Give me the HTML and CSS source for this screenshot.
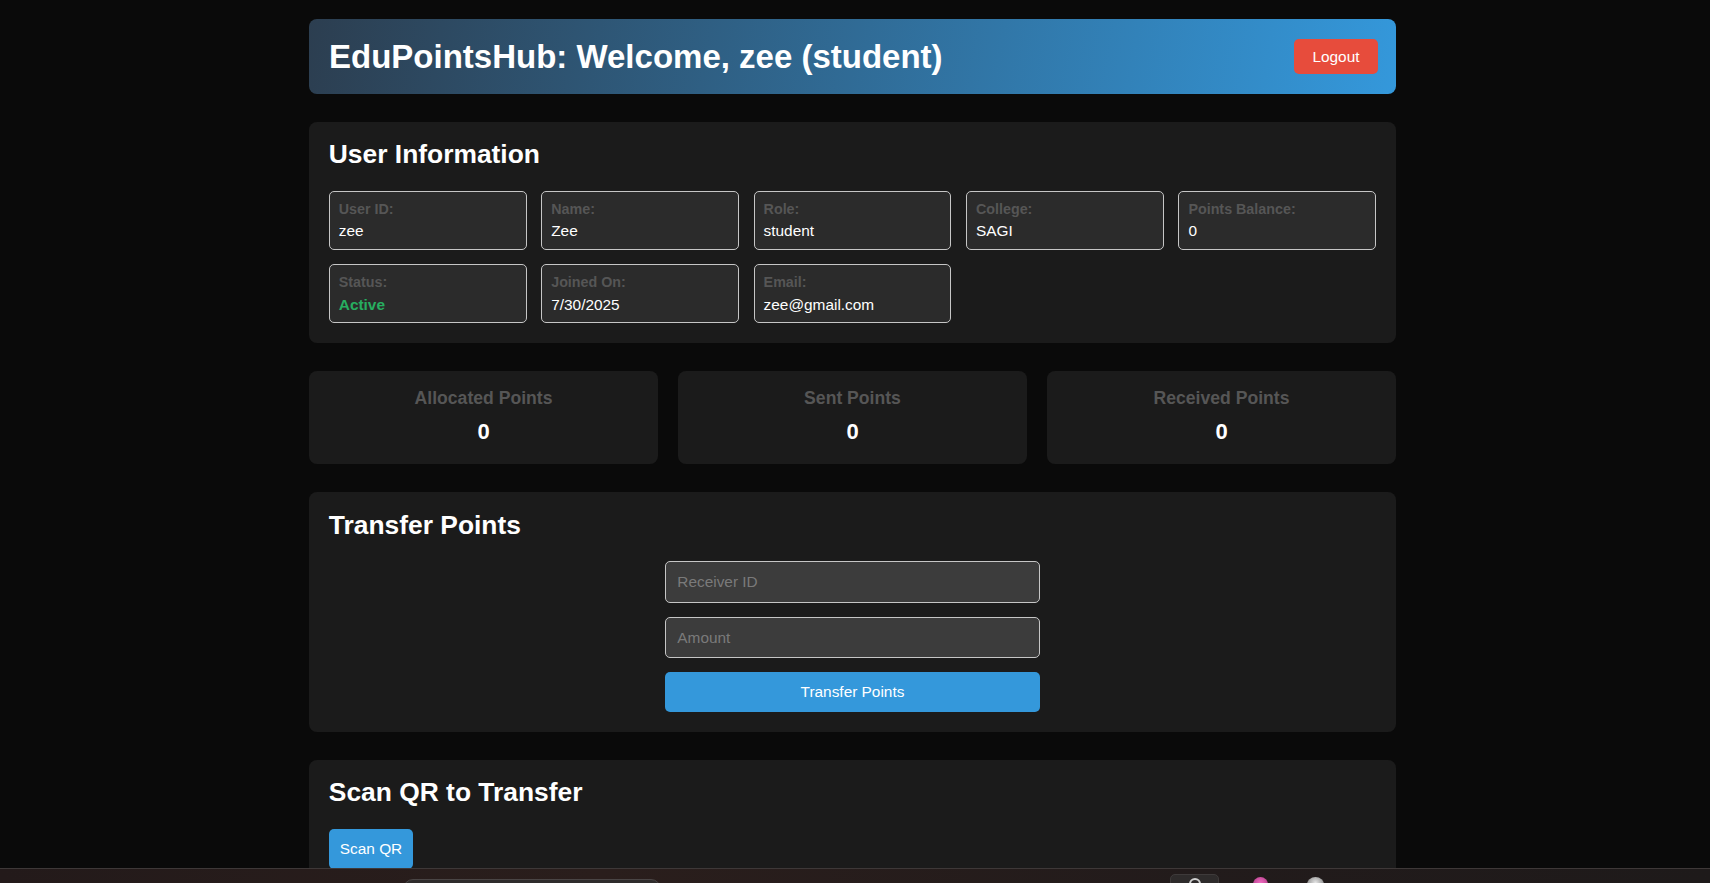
FILE: index.html
```html
<!DOCTYPE html>
<html lang="en">
<head>
<meta charset="utf-8">
<title>EduPointsHub</title>
<link rel="stylesheet" href="styles.css">
</head>
<body>
<div class="container">
  <header class="topbar">
    <h1 class="title">EduPointsHub: Welcome, zee (student)</h1>
    <button class="btn-logout">Logout</button>
  </header>

  <section class="card">
    <h2 class="card-title">User Information</h2>
    <div class="info-grid">
      <div class="info-box"><div class="info-label">User ID:</div><div class="info-value">zee</div></div>
      <div class="info-box"><div class="info-label">Name:</div><div class="info-value">Zee</div></div>
      <div class="info-box"><div class="info-label">Role:</div><div class="info-value">student</div></div>
      <div class="info-box"><div class="info-label">College:</div><div class="info-value">SAGI</div></div>
      <div class="info-box"><div class="info-label">Points Balance:</div><div class="info-value">0</div></div>
      <div class="info-box"><div class="info-label">Status:</div><div class="info-value status-active">Active</div></div>
      <div class="info-box"><div class="info-label">Joined On:</div><div class="info-value">7/30/2025</div></div>
      <div class="info-box"><div class="info-label">Email:</div><div class="info-value">zee@gmail.com</div></div>
    </div>
  </section>

  <section class="stats">
    <div class="stat-card"><div class="stat-label">Allocated Points</div><div class="stat-value">0</div></div>
    <div class="stat-card"><div class="stat-label">Sent Points</div><div class="stat-value">0</div></div>
    <div class="stat-card"><div class="stat-label">Received Points</div><div class="stat-value">0</div></div>
  </section>

  <section class="card card-transfer">
    <h2 class="card-title">Transfer Points</h2>
    <form class="transfer-form">
      <input class="field" type="text" placeholder="Receiver ID">
      <input class="field" type="text" placeholder="Amount">
      <button type="button" class="btn-primary btn-block">Transfer Points</button>
    </form>
  </section>

  <section class="card card-last">
    <h2 class="card-title">Scan QR to Transfer</h2>
    <button type="button" class="btn-primary">Scan QR</button>
  </section>
</div>

<div class="taskbar">
  <div class="tb-search"></div>
  <div class="tb-app"><span class="tb-app-dot"></span></div>
  <div class="tb-icon tb-pink"></div>
  <div class="tb-icon tb-white"></div>
</div>
</body>
</html>
```
FILE: styles.css
```css
* { box-sizing: border-box; }

html, body { height: 100%; }

body {
  margin: 0;
  padding: 19px 5px 0 0;
  background: #0a0a0a;
  color: #ffffff;
  font-family: "Liberation Sans", Arial, sans-serif;
}

.container {
  width: 1087px;
  margin: 0 auto;
  display: flex;
  flex-direction: column;
  gap: 27.8px;
}

.topbar {
  height: 75px;
  padding: 0 18px 0 20px;
  display: flex;
  align-items: center;
  justify-content: space-between;
  border-radius: 8px;
  background: linear-gradient(100deg, #2c3e50 0%, #3498db 100%);
}

.title {
  margin: 0;
  font-size: 33px;
  font-weight: bold;
  line-height: 1.15;
}

.btn-logout {
  height: 35px;
  padding: 0 18.5px;
  border: none;
  border-radius: 5px;
  background: #e74c3c;
  color: #ffffff;
  font-family: inherit;
  font-size: 15.4px;
}

.card {
  background: #1b1b1b;
  border-radius: 8px;
  padding: 17.6px 19.8px 19.5px;
}

.card-transfer { padding-bottom: 20px; }

.card-last { padding-bottom: 60px; }

.card-title {
  margin: 0 0 21px;
  font-size: 26.4px;
  font-weight: bold;
  line-height: 1.15;
}

.info-grid {
  display: grid;
  grid-template-columns: repeat(5, 1fr);
  gap: 14.6px;
}

.info-box {
  background: #2b2b2b;
  border: 1px solid #c6c6c6;
  border-radius: 5px;
  padding: 9px 9px 8.8px;
}

.info-label {
  color: #565656;
  font-size: 14.3px;
  font-weight: bold;
  line-height: 1.15;
  margin-bottom: 5px;
}

.info-value {
  color: #ffffff;
  font-size: 15.4px;
  line-height: 1.15;
}

.status-active {
  color: #27ae60;
  font-weight: bold;
}

.stats {
  display: grid;
  grid-template-columns: repeat(3, 1fr);
  gap: 20px;
}

.stat-card {
  background: #1b1b1b;
  border-radius: 8px;
  padding: 17.6px 17.6px 19.6px;
  text-align: center;
}

.stat-label {
  color: #565656;
  font-size: 17.6px;
  font-weight: bold;
  line-height: 1.15;
  margin-bottom: 11px;
}

.stat-value {
  color: #ffffff;
  font-size: 22px;
  font-weight: bold;
  line-height: 1.15;
}

.transfer-form {
  width: 374.4px;
  margin: 0 auto;
  display: flex;
  flex-direction: column;
  gap: 14px;
}

.field {
  width: 100%;
  padding: 11px;
  background: #3c3c3c;
  border: 1px solid #c6c6c6;
  border-radius: 5px;
  color: #ffffff;
  font-family: inherit;
  font-size: 15.4px;
  line-height: 1.15;
  outline: none;
}

.field::placeholder { color: #7a7a7a; }

.btn-primary {
  padding: 11px;
  background: #3498db;
  border: none;
  border-radius: 5px;
  color: #ffffff;
  font-family: inherit;
  font-size: 15.4px;
  line-height: 1.15;
}

.btn-block { width: 100%; }

.taskbar {
  position: fixed;
  left: 0;
  right: 0;
  bottom: 0;
  height: 15px;
  border-top: 1px solid #3e3838;
  background: linear-gradient(90deg, #231a1a 0%, #2a1e1c 35%, #221b1b 70%, #1e1a1a 100%);
  display: flex;
  align-items: flex-start;
  overflow: hidden;
}

.tb-search {
  margin: 10px 0 0 403px;
  width: 258px;
  height: 20px;
  border-radius: 10px;
  background: #2f2c2c;
  border: 1px solid #4a4545;
}

.tb-app {
  margin: 5px 0 0 509px;
  width: 49px;
  height: 20px;
  border-radius: 5px;
  background: #2e2b2b;
  border: 1px solid #3e3a3a;
  display: flex;
  justify-content: center;
}

.tb-app-dot {
  margin-top: 3px;
  width: 12px;
  height: 12px;
  border-radius: 50%;
  border: 2px solid #cfcfcf;
}

.tb-icon {
  margin-top: 8px;
  width: 15px;
  height: 15px;
  border-radius: 50%;
}

.tb-pink {
  margin-left: 34px;
  background: radial-gradient(circle at 50% 40%, #f06bc0, #a2307a);
}

.tb-white {
  margin-left: 39px;
  width: 17px;
  background: radial-gradient(circle at 50% 40%, #e8e8e8, #6a6a6a);
}
```
